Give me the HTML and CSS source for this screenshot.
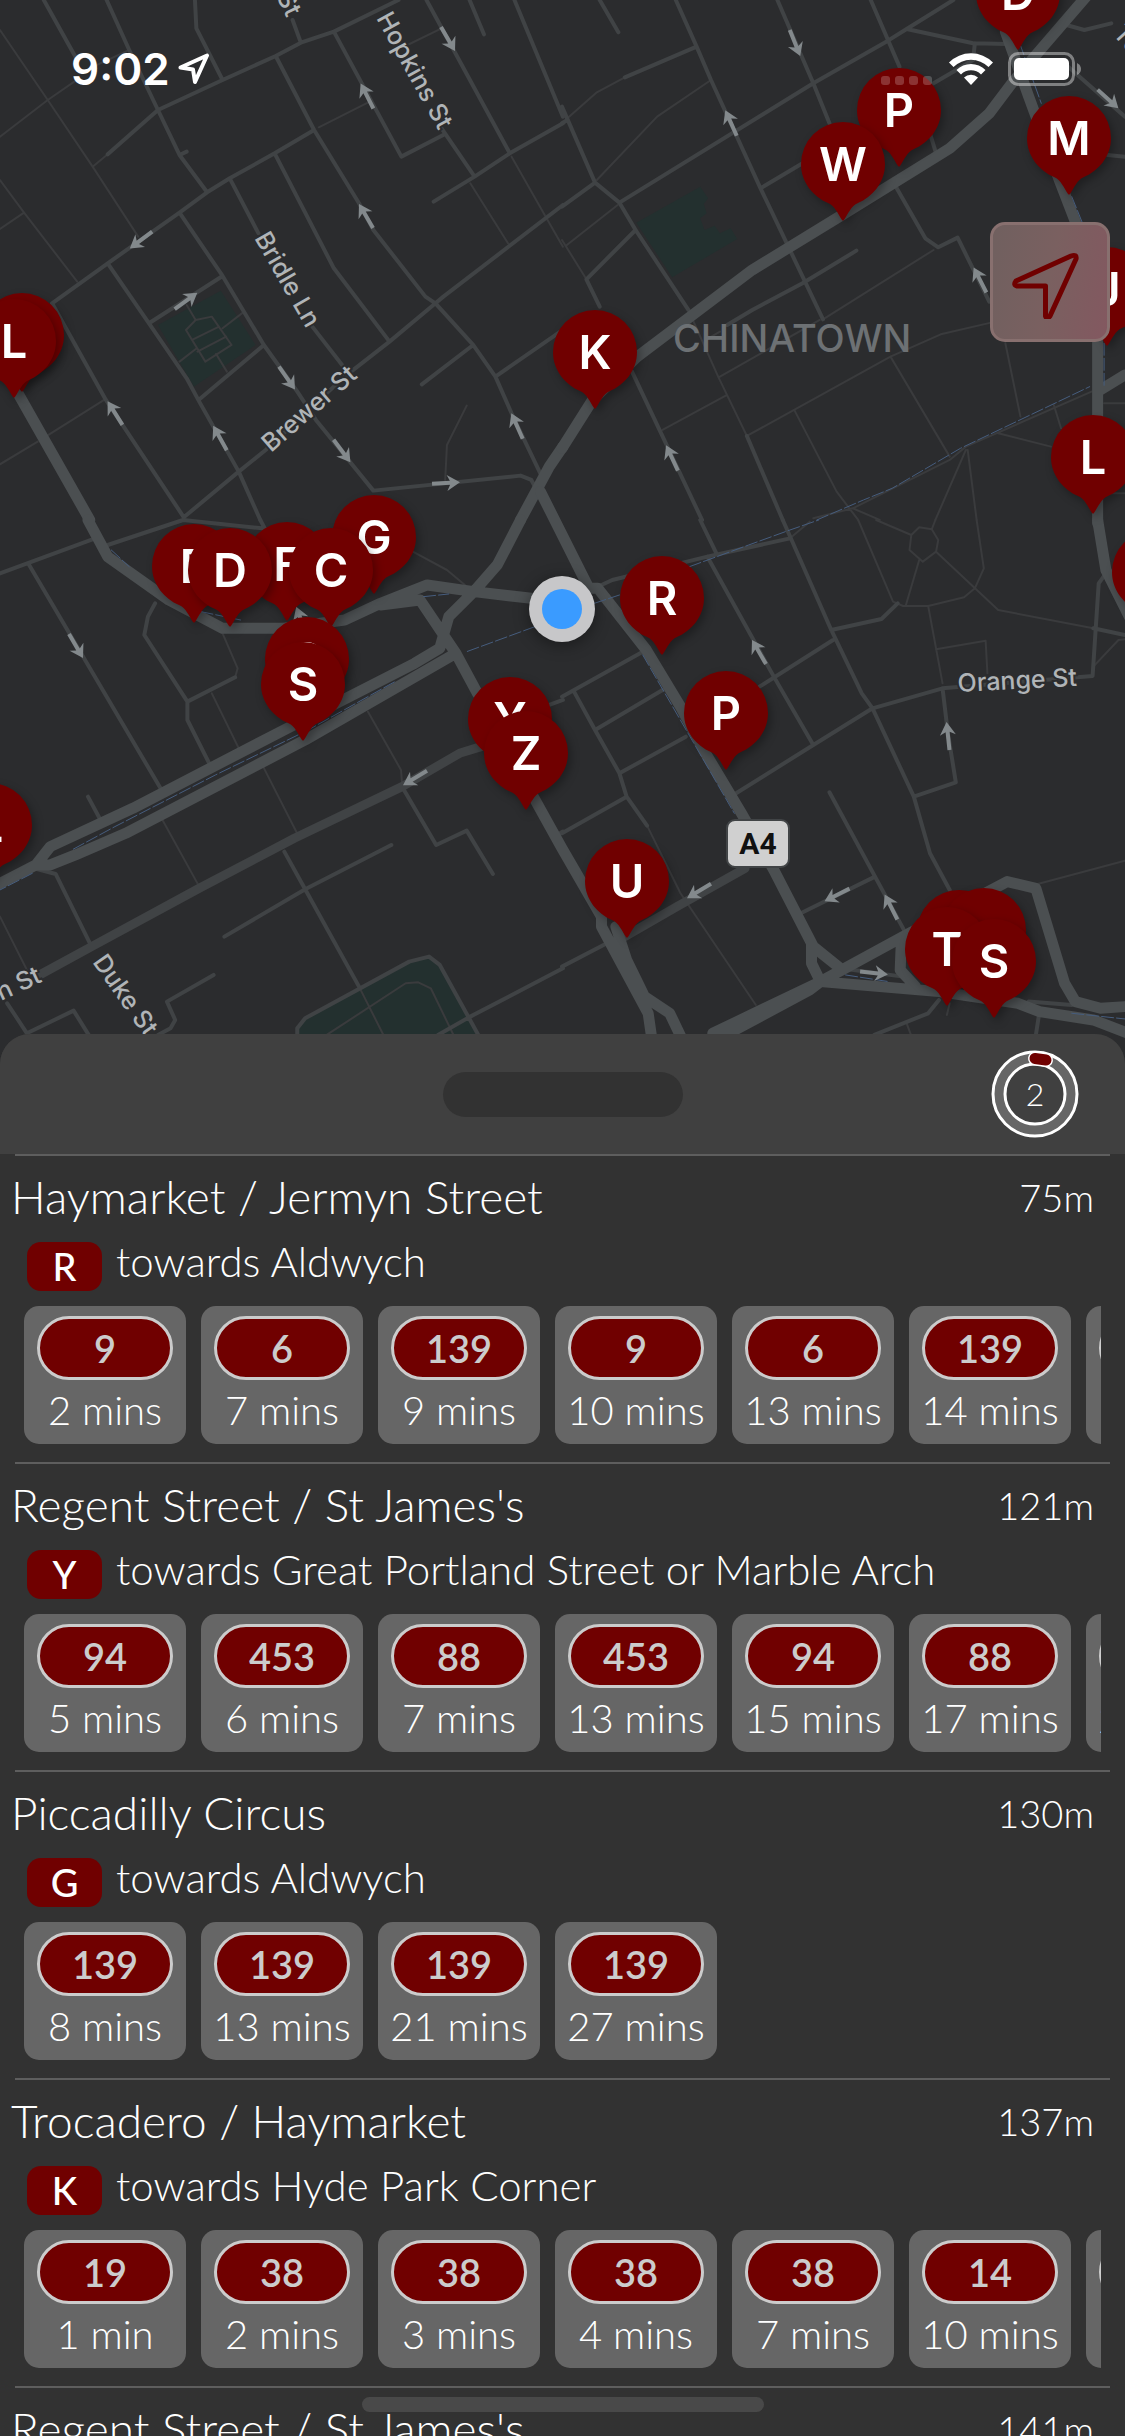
FILE: index.html
```html
<!DOCTYPE html>
<html lang="en">
<head>
<meta charset="utf-8">
<meta name="viewport" content="width=device-width, initial-scale=1">
<title>Nearby bus stops</title>
<link rel="stylesheet" href="styles.css">
</head>
<body>
<div class="app">
  <section class="map" aria-label="Map">
    <svg class="map-canvas" viewBox="0 0 1125 1062" preserveAspectRatio="xMidYMin slice">
      <defs>
        <path id="arrow" d="M-14 -2H4L1 -8L14 0L1 8L4 2H-14Z"/>
        <path id="pin" d="M-42 0A42 42 0 0 1 42 0C42 19 29 33 15 39C8 42 5 50 1 56Q0 57 -1 56C-5 50 -8 42 -15 39C-29 33 -42 19 -42 0Z"/>
      </defs>

      <!-- parks -->
      <g class="park">
        <path transform="scale(.359 .3333)" d="M440 975L615 872L712 1035L540 1160Z"/>
        <path transform="translate(562 0) scale(.359 .3333)" d="M207 668L385 560L407 595L395 612L403 640L385 655L397 690L425 677L440 700L470 685L488 717L307 832Z"/>
        <path transform="translate(0 520) scale(.359 .3333)" d="M830 1560V1525L850 1495L1140 1325L1195 1310L1225 1335L1335 1560Z"/>
      </g>

      <!-- north-west -->
      <g transform="scale(.359 .3333)">
        <path class="lane" d="M0 90L133 300L258 500L385 710M0 410L133 300L220 235M258 500L300 463M0 540L67 638L215 845M0 687L67 638M888 382L1030 305M1135 135L1230 85M1310 550L1415 730M1425 470L1520 650L1568 740M0 1393L105 1325M135 1305L290 1200M1300 1217L1245 1335L1240 1440M260 200L360 150M520 915L545 960L590 950L645 1035L572 1085L518 990L545 960M535 1020L610 980M550 1055L630 1010M620 985L680 935M500 1085L548 1045M602 1062L632 1115"/>
        <path class="street" d="M122 0L210 170M297 0L360 150L440 330L500 465L577 577M500 465L520 455M543 0L547 85L620 240M300 463L440 330L620 240L768 168L838 128L930 95L1110 0M815 60L838 128M930 95L1118 470L1240 402M1230 385L1322 530M768 168L875 390L1000 610L1040 690L1185 890L1213 910L1318 1035L1380 1130L1425 1240L1505 1420M1568 615L1235 890L1213 910L1085 1025L960 1130L740 1350L665 1415L512 1552M1085 1025L930 805L765 460M145 910L300 790L500 638L577 577L640 535L765 460L875 390M640 535L720 700M870 980L960 1105M500 638L620 828L735 1035L825 1170L880 1260L1040 1472L1450 1427L1480 1440L1495 1470M620 828L415 970M735 1035L553 1200M300 790L415 970L520 1135L555 1205L665 1415L725 1560M145 910L295 1200L512 1552M1188 0L1420 460M1208 605L1322 530L1420 460L1568 370M1308 0L1348 103M1433 0L1568 350M1175 1153L1318 1035M1380 1130L1568 990"/>
        <path class="road" d="M50 1180L250 1560M1568 1340L1530 1400L1450 1560"/>
      </g>

      <!-- north-east -->
      <g transform="translate(562 0) scale(.359 .3333)">
        <path class="lane" d="M175 232L97 277L15 355M352 930L435 1130L515 1308M415 240L265 350L97 540M0 720L68 838M10 738L155 615M727 958L1035 750M400 1020L440 995M440 1130L718 960M280 1290L460 1185M515 1308L915 1070L1055 1003L1195 968M915 1070L1080 1370M648 1232L765 1475L825 1560M1235 1030L1277 1250M1215 1300L1362 1340M1370 1215L1390 1285M1125 1350L1040 1560M1130 1350L1155 1560M700 1555L810 1525L1080 1380L1125 1340L1475 1175M810 1525L885 1560M1510 1210H1568M1510 1480H1568"/>
        <path class="street" d="M105 0L157 97M317 0L375 140L415 240L553 565L727 958M375 140L175 232M0 320L92 548L160 608L205 690L352 930M515 1308L615 1560M0 620L92 548M0 370L15 360M160 608L700 250L908 122L960 87L1090 0M960 87L1145 130L1240 132M600 0L700 250L745 370M860 0L940 200M1025 400L1042 460M553 565L670 490M1035 250L1090 215L1145 180L1150 130M205 690L68 838L105 920M460 975L530 930L670 850L820 752M930 560L1012 715L1048 742L1102 713L1190 905M195 1115L390 1560M1405 75L1455 90L1530 70M1410 200L1568 350M1520 465L1568 470"/>
        <path class="road" d="M0 1345L85 1200L210 1070L530 810L780 645L1080 445L1190 340L1260 240L1460 -10M1235 95L1300 290L1385 540L1430 665L1492 1020V1570M1568 1125L1492 1175"/>
        <path class="rail" d="M710 1560L840 1500L920 1465L1110 1345L1470 1160M1275 130L1335 310M1420 590L1450 670M1510 1030V1160"/>
      </g>

      <!-- south-west -->
      <g transform="translate(0 520) scale(.359 .3333)">
        <path class="lane" d="M450 895L555 1100M655 472L662 445L620 340M590 520L665 685M733 740L830 945M1025 575L1117 750L1120 790M1000 1400L1075 1560M1150 95L1245 150L1295 195M0 1190L75 1350M910 1545L1130 1390L1165 1387L1200 1405L1270 1560"/>
        <path class="street" d="M0 160L265 55M300 75L510 0L730 25M725 0L740 30M80 133L450 810M432 250L412 290L402 345L522 545V600L585 735M522 545L655 472M1120 800L1215 975L1300 932L1373 1062M625 1250L850 1108L1090 975M792 995L850 1108L1000 1400M245 830L280 900M95 1045L155 1062L255 1280M20 1450L75 1540L205 1472L250 1550M595 1365L465 1445L488 1500L475 1525L440 1545M1220 1545L1310 1490L1568 1345M1530 555L1568 540M1550 945L1568 935M828 1560V1525L850 1495L1140 1325L1195 1310L1225 1335L1340 1560"/>
        <path class="avenue" d="M110 1365L255 1280L555 1105L820 955L1120 800L1280 700L1340 680"/>
        <path class="road" d="M245 0L300 110L470 240L620 325H790L960 300L1060 250L1190 195L1320 215L1480 235M1320 215L1385 135L1450 0M1320 215L1250 290L1225 385L1155 430L800 625L370 865L140 980L100 1035L-10 1096M1060 255L1170 240L1270 400L1330 520M1270 400L850 660L350 940L210 1005L140 1035L100 1035"/>
        <path class="rail" d="M1490 320L1300 395M850 635L1100 485M830 645L600 765L320 920L200 990M90 1060L0 1110M560 275L670 300M1180 230L1250 222M310 90L360 140"/>
      </g>

      <!-- south-east -->
      <g transform="translate(562 520) scale(.359 .3333)">
        <path class="lane" d="M825 0L922 245L950 258H1020L1120 232L1150 205L1175 145L1155 0M958 255L995 120M995 22L1030 28L1048 60L1042 95L1005 125L968 90L973 45ZM875 0L973 45M1030 28L1040 0M1042 95L1215 270L1480 325M1020 258L1060 490M1042 388L1180 362L1185 460M1480 440L1550 360L1568 358M1325 1092L1568 1022M1080 1450L1072 1485M960 1510L972 1545M635 55L690 5M237 917L330 1120L540 1455"/>
        <path class="street" d="M385 0L430 100M110 195L140 180L405 110L635 55M615 0L750 330L835 520L865 565L980 830L1025 1000L1080 1110M405 110L590 470L700 675M0 530L225 395M550 500L755 360M750 330L890 297L935 250M485 820L700 675L865 565L1060 505L1478 468L1495 190L1515 160M1480 325L1568 345M32 512L92 630L160 760L180 830L237 917M92 630L280 510M160 760L345 650M0 940L180 830M0 1340L125 1270M745 817L872 1070L955 1235M872 1070L665 1180M1060 505L1075 640L1097 787L980 830M1050 1440L1020 1480L870 1545M775 1345L950 1370M1330 1475L1320 1545M1300 1445L1420 1455"/>
        <path class="avenue" d="M175 1250L320 1160L510 1045"/>
        <path class="road" d="M-60 -85L75 205H100L235 390L330 560L400 700L500 880L590 1050L700 1280L775 1345M695 1270V1330L720 1385M-85 820L0 985L110 1190V1220L165 1330L240 1480L252 1570M150 1220L180 1320L230 1430L300 1480L340 1570M430 1560L690 1410L720 1385M420 1540L720 1385L950 1250L1240 1085L1320 1105L1400 1390L1430 1445L1500 1465L1568 1460M720 1385L1050 1415L1270 1450L1330 1475L1480 1500L1600 1550M945 1270L942 1350L985 1400M1492 0L1515 150L1580 290"/>
        <path class="rail" d="M90 250L160 225M355 140L520 75L635 30L715 0M225 405L480 880M790 1365L910 1385M1420 1480L1568 1497"/>
      </g>

      <!-- one-way arrows -->
      <g class="oneway">
        <use href="#arrow" transform="translate(448 39) rotate(60)"/>
        <use href="#arrow" transform="translate(367 96) rotate(243)"/>
        <use href="#arrow" transform="translate(141 240) rotate(143)"/>
        <use href="#arrow" transform="translate(366 216) rotate(240)"/>
        <use href="#arrow" transform="translate(186 301) rotate(-36)"/>
        <use href="#arrow" transform="translate(287 378) rotate(55)"/>
        <use href="#arrow" transform="translate(115 413) rotate(238)"/>
        <use href="#arrow" transform="translate(220 438) rotate(241)"/>
        <use href="#arrow" transform="translate(342 451) rotate(53)"/>
        <use href="#arrow" transform="translate(517 426) rotate(246)"/>
        <use href="#arrow" transform="translate(446 483) rotate(-3)"/>
        <use href="#arrow" transform="translate(795 43) rotate(68)"/>
        <use href="#arrow" transform="translate(731 123) rotate(246)"/>
        <use href="#arrow" transform="translate(980 280) rotate(243)"/>
        <use href="#arrow" transform="translate(672 458) rotate(245)"/>
        <use href="#arrow" transform="translate(1108 99) rotate(42)"/>
        <use href="#arrow" transform="translate(76 646) rotate(60)"/>
        <use href="#arrow" transform="translate(301 620) rotate(-110)"/>
        <use href="#arrow" transform="translate(415 778) rotate(149)"/>
        <use href="#arrow" transform="translate(759 652) rotate(240)"/>
        <use href="#arrow" transform="translate(948 736) rotate(-96)"/>
        <use href="#arrow" transform="translate(699 891) rotate(149)"/>
        <use href="#arrow" transform="translate(837 895) rotate(153)"/>
        <use href="#arrow" transform="translate(891 907) rotate(243)"/>
        <use href="#arrow" transform="translate(874 973) rotate(6)"/>
      </g>

      <!-- place names -->
      <g class="label">
        <text transform="translate(276 -4) rotate(64)">St</text>
        <text transform="translate(376 18) rotate(61)">Hopkins St</text>
        <text transform="translate(254 238) rotate(60)">Bridle Ln</text>
        <text transform="translate(271 453) rotate(-41)">Brewer St</text>
        <text transform="translate(958 692) rotate(-3)">Orange St</text>
        <text transform="translate(92 962) rotate(55)">Duke St</text>
        <text transform="translate(1 1001) rotate(-25)">n St</text>
        <text transform="translate(1112 34) rotate(48)">To</text>
      </g>
      <text class="district" x="673" y="352">CHINATOWN</text>
      <rect class="shield" x="727" y="820" width="62" height="47" rx="8"/>
      <text class="shield-text" x="758" y="854">A4</text>

      <!-- current position -->
      <circle class="me-ring" cx="562" cy="609" r="33"/>
      <circle class="me-dot" cx="562" cy="609" r="20"/>

      <!-- bus stops -->
      <g class="pins">
        <g transform="translate(22 335)"><use href="#pin"/></g>
        <g transform="translate(14 341)"><use href="#pin"/><text y="17">L</text></g>
        <g transform="translate(-10 825)"><use href="#pin"/><text y="17">L</text></g>
        <g transform="translate(1018 -7)"><use href="#pin"/><text y="17">D</text></g>
        <g transform="translate(899 110)"><use href="#pin"/><text y="17">P</text></g>
        <g transform="translate(843 164)"><use href="#pin"/><text y="17">W</text></g>
        <g transform="translate(1069 138)"><use href="#pin"/><text y="17">M</text></g>
        <g transform="translate(1107 289)"><use href="#pin"/><text y="17">J</text></g>
        <g transform="translate(595 352)"><use href="#pin"/><text y="17">K</text></g>
        <g transform="translate(1093 457)"><use href="#pin"/><text y="17">L</text></g>
        <g transform="translate(1154 572)"><use href="#pin"/></g>
        <g transform="translate(374 537)"><use href="#pin"/><text y="17">G</text></g>
        <g transform="translate(194 566)"><use href="#pin"/><text y="17">E</text></g>
        <g transform="translate(287 564)"><use href="#pin"/><text y="17">F</text></g>
        <g transform="translate(230 570)"><use href="#pin"/><text y="17">D</text></g>
        <g transform="translate(331 570)"><use href="#pin"/><text y="17">C</text></g>
        <g transform="translate(307 659)"><use href="#pin"/><text y="17">Q</text></g>
        <g transform="translate(303 684)"><use href="#pin"/><text y="17">S</text></g>
        <g transform="translate(510 719)"><use href="#pin"/><text y="17">Y</text></g>
        <g transform="translate(526 753)"><use href="#pin"/><text y="17">Z</text></g>
        <g transform="translate(662 598)"><use href="#pin"/><text y="17">R</text></g>
        <g transform="translate(726 713)"><use href="#pin"/><text y="17">P</text></g>
        <g transform="translate(627 881)"><use href="#pin"/><text y="17">U</text></g>
        <g transform="translate(959 932)"><use href="#pin"/></g>
        <g transform="translate(984 930)"><use href="#pin"/></g>
        <g transform="translate(947 949)"><use href="#pin"/><text y="17">T</text></g>
        <g transform="translate(994 961)"><use href="#pin"/><text y="17">S</text></g>
      </g>
    </svg>

    <div class="status">
      <span class="clock">9:02</span>
      <svg class="status-arrow" viewBox="0 0 32 32"><path d="M2.500 14.500L29 2.500L17 29L15 16.500Z"/></svg>
      <svg class="status-dots" viewBox="0 0 52 10"><rect width="9" height="9" rx="3"/><rect x="14" width="9" height="9" rx="3"/><rect x="28" width="9" height="9" rx="3"/><rect x="42" width="9" height="9" rx="3"/></svg>
      <svg class="status-wifi" viewBox="0 0 46 34"><path d="M1 10.500A31 31 0 0 1 45 10.500L40.500 15A25 25 0 0 0 5.500 15Z"/><path d="M8.500 18A20.500 20.500 0 0 1 37.500 18L33 22.500A14 14 0 0 0 13 22.500Z"/><path d="M16 25.500A10 10 0 0 1 30 25.500L23 33Z"/></svg>
      <svg class="status-battery" viewBox="0 0 74 34"><rect class="cell" x="1.500" y="1.500" width="64" height="31" rx="9"/><rect class="charge" x="6" y="6" width="55" height="22" rx="5"/><path class="nub" d="M69 11Q73 13 73 17T69 23Z"/></svg>
    </div>

    <button class="locate" type="button" aria-label="Centre on my location">
      <svg viewBox="0 0 72 76"><path d="M59 13L4 38Q1 42 5 43H33.500V73Q35 77 38 73L64 16Q65 11 59 13Z"/></svg>
    </button>
  </section>

  <main class="sheet">
    <header class="sheet-head">
      <span class="grabber"></span>
      <svg class="timer" viewBox="0 0 88 88" role="img" aria-label="Refreshing in 2 seconds">
        <circle class="timer-track" cx="44" cy="44" r="36"/>
        <circle class="timer-line" cx="44" cy="44" r="42"/>
        <circle class="timer-line" cx="44" cy="44" r="30"/>
        <path class="timer-edge" d="M44 8.500L55 10"/>
        <path class="timer-mark" d="M44 8.500L55 10"/>
        <text x="44" y="56">2</text>
      </svg>
    </header>

    <ul class="stops">
      <li class="stop">
        <div class="stop-head"><h2>Haymarket / Jermyn Street</h2><span class="distance">75m</span></div>
        <div class="direction"><span class="letter">R</span><span>towards Aldwych</span></div>
        <ol class="buses">
          <li class="bus"><b>9</b><span>2 mins</span></li>
          <li class="bus"><b>6</b><span>7 mins</span></li>
          <li class="bus"><b>139</b><span>9 mins</span></li>
          <li class="bus"><b>9</b><span>10 mins</span></li>
          <li class="bus"><b>6</b><span>13 mins</span></li>
          <li class="bus"><b>139</b><span>14 mins</span></li>
          <li class="bus"><b></b></li>
        </ol>
      </li>
      <li class="stop">
        <div class="stop-head"><h2>Regent Street / St James's</h2><span class="distance">121m</span></div>
        <div class="direction"><span class="letter">Y</span><span>towards Great Portland Street or Marble Arch</span></div>
        <ol class="buses">
          <li class="bus"><b>94</b><span>5 mins</span></li>
          <li class="bus"><b>453</b><span>6 mins</span></li>
          <li class="bus"><b>88</b><span>7 mins</span></li>
          <li class="bus"><b>453</b><span>13 mins</span></li>
          <li class="bus"><b>94</b><span>15 mins</span></li>
          <li class="bus"><b>88</b><span>17 mins</span></li>
          <li class="bus"><b></b><span>20 mins</span></li>
        </ol>
      </li>
      <li class="stop">
        <div class="stop-head"><h2>Piccadilly Circus</h2><span class="distance">130m</span></div>
        <div class="direction"><span class="letter">G</span><span>towards Aldwych</span></div>
        <ol class="buses">
          <li class="bus"><b>139</b><span>8 mins</span></li>
          <li class="bus"><b>139</b><span>13 mins</span></li>
          <li class="bus"><b>139</b><span>21 mins</span></li>
          <li class="bus"><b>139</b><span>27 mins</span></li>
        </ol>
      </li>
      <li class="stop">
        <div class="stop-head"><h2>Trocadero / Haymarket</h2><span class="distance">137m</span></div>
        <div class="direction"><span class="letter">K</span><span>towards Hyde Park Corner</span></div>
        <ol class="buses">
          <li class="bus"><b>19</b><span>1 min</span></li>
          <li class="bus"><b>38</b><span>2 mins</span></li>
          <li class="bus"><b>38</b><span>3 mins</span></li>
          <li class="bus"><b>38</b><span>4 mins</span></li>
          <li class="bus"><b>38</b><span>7 mins</span></li>
          <li class="bus"><b>14</b><span>10 mins</span></li>
          <li class="bus"><b></b></li>
        </ol>
      </li>
      <li class="stop">
        <div class="stop-head"><h2>Regent Street / St James's</h2><span class="distance">141m</span></div>
      </li>
    </ul>
  </main>
  <div class="home-bar"></div>
</div>
</body>
</html>
```
FILE: styles.css
```css
* { box-sizing: border-box; }

body {
  margin: 0;
  background: #323232;
  color: #fff;
  font-family: Lato, "Liberation Sans", sans-serif;
  font-weight: 300;
}

ul, ol { list-style: none; margin: 0; padding: 0; }

.app {
  position: relative;
  display: flex;
  flex-direction: column;
  height: 100vh;
  overflow: hidden;
}

/* Map */
.map { position: relative; flex: none; }
.map-canvas { display: block; width: 100%; background: #2b2c2e; font-family: Inter, "Liberation Sans", sans-serif; }
.map-canvas path { vector-effect: non-scaling-stroke; }
.park { fill: #23302f; }
.lane, .street, .avenue, .road, .rail { fill: none; stroke-linecap: round; stroke-linejoin: round; }
.lane { stroke: #3a3b3d; stroke-width: 2px; }
.street { stroke: #404345; stroke-width: 4px; }
.avenue { stroke: #404345; stroke-width: 9px; }
.road { stroke: #4b4f51; stroke-width: 11px; }
.rail { stroke: #465d7e; stroke-width: 1px; stroke-dasharray: 12 3; }
.oneway { fill: #83898c; }
.label { fill: #b0b4b7; stroke: #2b2c2e; stroke-width: 4px; paint-order: stroke; font-size: 25px; font-weight: 500; }
.district { fill: #6d7174; font-size: 38px; font-weight: 500; }
.shield { fill: #d0d0d0; stroke: #414446; stroke-width: 2px; }
.shield-text { fill: #111; font: 700 30px Roboto, "Liberation Sans", sans-serif; text-anchor: middle; }
.me-ring { fill: #c7c7c9; filter: drop-shadow(0 3px 8px rgba(0, 0, 0, .4)); }
.me-dot { fill: #3a9bff; }
.pins > g { fill: #700000; filter: drop-shadow(3px 4px 4px rgba(0, 0, 0, .3)); }
.pins text { fill: #fff; font-size: 47px; font-weight: 600; text-anchor: middle; }

/* Status bar */
.status {
  position: absolute;
  inset: 0 0 auto;
  display: flex;
  align-items: center;
  height: 138px;
  padding: 0 43px 0 71px;
}
.clock { font: 600 44px/50px Inter, "Liberation Sans", sans-serif; }
.status svg { flex: none; }
.status-arrow { width: 32px; height: 32px; margin-left: 8px; fill: none; stroke: #fff; stroke-width: 4; stroke-linejoin: round; }
.status-dots { width: 52px; height: 10px; margin: 24px 15px 0 auto; fill: rgba(255, 255, 255, .2); }
.status-wifi { width: 46px; height: 34px; fill: #fff; }
.status-battery { width: 74px; height: 34px; margin-left: 14px; }
.cell { fill: none; stroke: rgba(255, 255, 255, .4); stroke-width: 3; }
.charge { fill: #fff; }
.nub { fill: rgba(255, 255, 255, .4); }

.locate {
  position: absolute;
  top: 222px;
  right: 15px;
  display: flex;
  width: 120px;
  height: 120px;
  padding: 18px 0 0 19px;
  border: 3px solid #88706f;
  border-radius: 15px;
  background: linear-gradient(100deg, #70605f, #7a6060 50%, #835860);
}
.locate svg { width: 72px; height: 76px; fill: none; stroke: #700000; stroke-width: 5; stroke-linejoin: round; }

/* Bottom sheet */
.sheet {
  position: relative;
  flex: 1;
  min-height: 0;
  margin-top: -28px;
  overflow: hidden;
  border-radius: 30px 30px 0 0;
  background: #323232;
}
.sheet-head {
  display: grid;
  grid-template-columns: 1fr auto 1fr;
  align-items: center;
  height: 120px;
  padding: 0 46px;
  background: #404040;
}
.grabber { grid-column: 2; width: 240px; height: 45px; border-radius: 23px; background: #323232; }
.timer { justify-self: end; width: 88px; height: 88px; }
.timer-track { fill: none; stroke: #666; stroke-width: 12; }
.timer-line { fill: none; stroke: #fff; stroke-width: 3; }
.timer-edge, .timer-mark { fill: none; stroke-linecap: round; }
.timer-edge { stroke: #fff; stroke-width: 14; }
.timer-mark { stroke: #700000; stroke-width: 11; }
.timer text { fill: #fff; font-size: 32px; text-anchor: middle; }

/* Stops */
.stop::before { content: ""; display: block; height: 2px; margin: 0 15px; background: #5e5e5e; }
.stop-head {
  display: flex;
  justify-content: space-between;
  padding: 0 31px 0 11px;
  line-height: 82px;
}
.stop-head h2 { margin: 0; font-size: 46px; font-weight: 300; }
.distance { font-size: 38px; }
.direction { display: flex; gap: 14px; padding: 4px 27px 15px; font-size: 42px; line-height: 38px; }
.letter {
  width: 75px;
  height: 49px;
  border-radius: 14px;
  background: #700000;
  font-size: 38px;
  font-weight: 500;
  line-height: 49px;
  text-align: center;
}
.buses { display: flex; gap: 15px; margin: 0 24px; padding-bottom: 18px; overflow: hidden; }
.bus {
  flex: none;
  display: flex;
  flex-direction: column;
  align-items: center;
  width: 162px;
  height: 138px;
  padding-top: 10px;
  border-radius: 15px;
  background: #666;
  font-size: 40px;
  line-height: 60px;
}
.bus b {
  width: 136px;
  height: 64px;
  border: 3px solid #ccc;
  border-radius: 32px;
  background: #700000;
  color: #ccc;
  font-size: 38px;
  font-weight: 600;
  line-height: 58px;
  text-align: center;
}

.home-bar {
  position: absolute;
  bottom: 24px;
  left: 50%;
  width: 402px;
  height: 15px;
  margin-left: -201px;
  border-radius: 8px;
  background: #494949;
}
```
